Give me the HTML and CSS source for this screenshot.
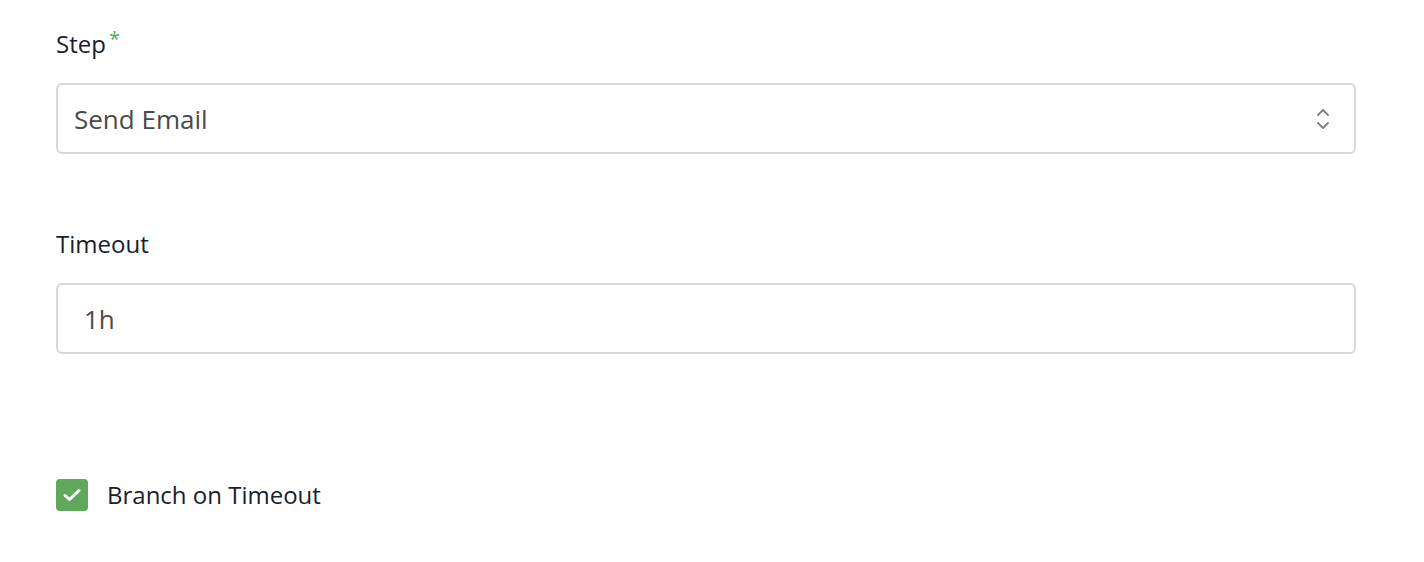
FILE: index.html
```html
<!DOCTYPE html>
<html>
<head>
<meta charset="UTF-8"/>
<title>Step settings</title>
<link rel="stylesheet" href="styles.css">
</head>
<body>
<form class="step-form">
    <div class="field">
        <label class="field-label">Step<span class="required">*</span></label>
        <div class="select-box">
            <span class="select-value">Send Email</span>
            <svg class="select-arrows" width="16" height="24" viewBox="0 0 16 24">
                <path d="M3 8 L8 3 L13 8" fill="none" stroke="#7b7f86" stroke-width="1.8" stroke-linecap="round" stroke-linejoin="round"/>
                <path d="M3 16 L8 21 L13 16" fill="none" stroke="#7b7f86" stroke-width="1.8" stroke-linecap="round" stroke-linejoin="round"/>
            </svg>
        </div>
    </div>

    <div class="field">
        <label class="field-label">Timeout</label>
        <div class="text-box">1h</div>
    </div>

    <div class="check-row">
        <span class="checkbox">
            <svg width="20" height="16" viewBox="0 0 20 16">
                <path d="M3 8.5 L7.5 12.5 L17 3.5" fill="none" stroke="#fff" stroke-width="3" stroke-linecap="round" stroke-linejoin="round"/>
            </svg>
        </span>
        <span class="check-label">Branch on Timeout</span>
    </div>
</form>
</body>
</html>
```

FILE: styles.css
```css
body {
    margin: 0;
    background: #fff;
    font-family: "Open Sans", Lato, sans-serif;
    color: #1a1e2b;
}
.step-form {
    padding: 30px 68px 0 56px;
}
.field {
    margin-bottom: 76px;
}
.field + .field {
    margin-bottom: 124px;
}
.field-label {
    display: block;
    font-size: 24px;
    line-height: 28px;
    margin-bottom: 25px;
}
.required {
    color: #4caf50;
    font-size: 20px;
    vertical-align: top;
    margin-left: 3px;
    position: relative;
    top: -5px;
}
.select-box,
.text-box {
    box-sizing: border-box;
    height: 71px;
    border: 2px solid #d5d8dc;
    border-radius: 6px;
    display: flex;
    align-items: center;
    font-size: 26px;
    color: #4a4a4a;
}
.select-box {
    justify-content: space-between;
    padding: 0 23px 0 16px;
}
.text-box {
    padding: 0 26px;
}
.check-row {
    display: flex;
    align-items: center;
    gap: 19px;
}
.checkbox {
    width: 32px;
    height: 32px;
    border-radius: 4px;
    background: #60a85c;
    display: flex;
    align-items: center;
    justify-content: center;
}
.check-label {
    font-size: 24px;
}
```
